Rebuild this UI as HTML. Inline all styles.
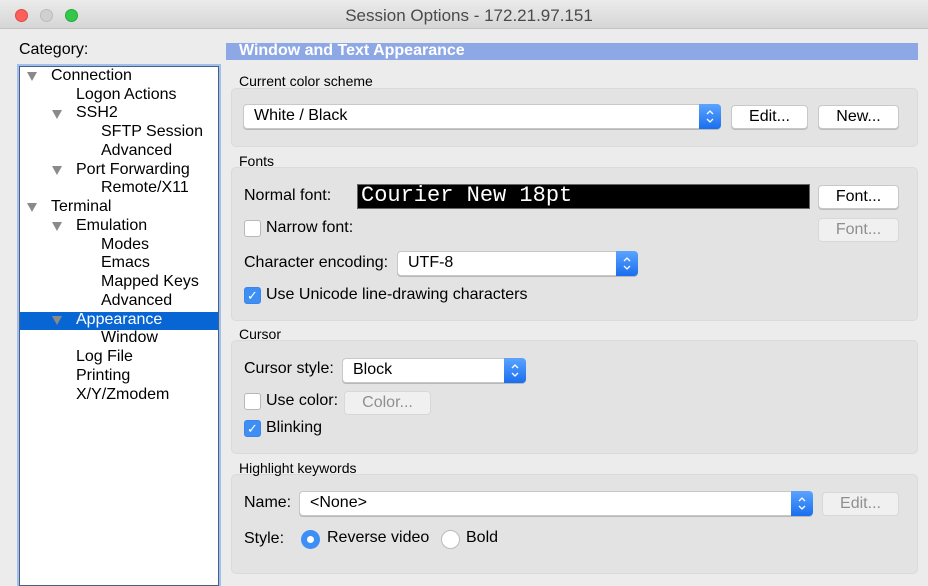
<!DOCTYPE html>
<html><head><meta charset="utf-8"><style>
*{box-sizing:border-box;margin:0;padding:0}
body{width:928px;height:577px;overflow:hidden;background:#ececec;font-family:"Liberation Sans",sans-serif;color:#000;position:relative}
.a{position:absolute;white-space:nowrap}
.tb{left:0;top:0;width:928px;height:29px;background:linear-gradient(#ebebeb,#d6d6d6);border-bottom:1px solid #c4c4c4}
.dot{width:13px;height:13px;border-radius:50%;top:9px}
.t{font-size:16px;line-height:18px}
.tree{left:19px;top:66px;width:200px;height:520px;background:#fff;border:1px solid #4b5f80;box-shadow:0 0 0 2px #9fc0ee}
.tri{width:0;height:0;border-left:5px solid transparent;border-right:5px solid transparent;border-top:9px solid #8a8a8a}
.grp{left:231px;width:687px;background:#e3e3e3;border:1px solid #dadada;border-radius:5px}
.lbl{font-size:14px}
.btn{background:#fff;border:1px solid #c8c8c8;border-radius:4px;text-align:center;font-size:16px;line-height:22px;box-shadow:0 1px 0 #bbb}
.dis{background:#f0f0f0;color:#8f8f8f;box-shadow:none;border-color:#d8d8d8}
.pop{background:#fff;border:1px solid #c8c8c8;border-radius:4px;box-shadow:0 1px 0 #b8b8b8;font-size:16px;line-height:22px;padding-left:10px}
.st{position:absolute;right:-1px;top:-1px;bottom:-1px;width:22px;background:linear-gradient(#5aa3ff,#1a6fee);border-radius:0 4px 4px 0}
.cb{width:17px;height:17px;border:1px solid #b8b8b8;background:#fff;border-radius:3px}
.cbc{background:#3d8ff6;border-color:#3a85e6;color:#fff;font-size:13px;line-height:15px;text-align:center}
</style></head><body>
<div class="a tb"></div>
<div class="a dot" style="left:15px;background:#fc605b;border:1px solid #de4a44"></div>
<div class="a dot" style="left:40px;background:#d0d0d0;border:1px solid #bbb"></div>
<div class="a dot" style="left:65px;background:#34c84a;border:1px solid #27a83a"></div>
<div class="a" style="left:0;width:928px;top:6px;text-align:center;font-size:17px;color:#4a4a4a;padding-left:10px">Session Options - 172.21.97.151</div>

<div class="a" style="left:19px;top:41px;font-size:16px">Category:</div>
<div class="a tree"></div>
<div class="a" style="left:20px;top:312px;width:198px;height:18px;background:#0866d4"></div>
<div class="a tri" style="left:27px;top:72px"></div>
<div class="a tri" style="left:52px;top:110px"></div>
<div class="a tri" style="left:52px;top:166px"></div>
<div class="a tri" style="left:27px;top:203px"></div>
<div class="a tri" style="left:52px;top:222px"></div>
<div class="a tri" style="left:52px;top:316px"></div>
<div class="a t" style="left:51px;top:67px">Connection</div>
<div class="a t" style="left:76px;top:86px">Logon Actions</div>
<div class="a t" style="left:76px;top:104px">SSH2</div>
<div class="a t" style="left:101px;top:123px">SFTP Session</div>
<div class="a t" style="left:101px;top:142px">Advanced</div>
<div class="a t" style="left:76px;top:161px">Port Forwarding</div>
<div class="a t" style="left:101px;top:179px">Remote/X11</div>
<div class="a t" style="left:51px;top:198px">Terminal</div>
<div class="a t" style="left:76px;top:217px">Emulation</div>
<div class="a t" style="left:101px;top:236px">Modes</div>
<div class="a t" style="left:101px;top:254px">Emacs</div>
<div class="a t" style="left:101px;top:273px">Mapped Keys</div>
<div class="a t" style="left:101px;top:292px">Advanced</div>
<div class="a t" style="left:76px;top:311px;color:#fff">Appearance</div>
<div class="a t" style="left:101px;top:329px">Window</div>
<div class="a t" style="left:76px;top:348px">Log File</div>
<div class="a t" style="left:76px;top:367px">Printing</div>
<div class="a t" style="left:76px;top:386px">X/Y/Zmodem</div>

<div class="a" style="left:226px;top:43px;width:692px;height:17px;background:#8ea8e6;color:#fff;font-weight:bold;font-size:16px;line-height:16px;padding-left:13px">Window and Text Appearance</div>

<div class="a grp" style="top:88px;height:59px"></div>
<div class="a lbl" style="left:239px;top:73px">Current color scheme</div>
<div class="a pop" style="left:243px;top:104px;width:478px;height:25px">White / Black<div class="st"><svg width="22" height="25"><path d="M8 10l3-3 3 3M8 15l3 3 3-3" stroke="#fff" stroke-width="1.3" fill="none"/></svg></div></div>
<div class="a btn" style="left:731px;top:105px;width:77px;height:24px">Edit...</div>
<div class="a btn" style="left:818px;top:105px;width:81px;height:24px">New...</div>

<div class="a grp" style="top:167px;height:154px"></div>
<div class="a lbl" style="left:239px;top:153px">Fonts</div>
<div class="a t" style="left:244px;top:187px">Normal font:</div>
<div class="a" style="left:357px;top:184px;width:453px;height:25px;background:#000;border:1px solid #666;color:#fff;font-family:'Liberation Mono',monospace;font-size:22px;line-height:22px;padding-left:3px">Courier New 18pt</div>
<div class="a btn" style="left:818px;top:185px;width:81px;height:24px">Font...</div>
<div class="a cb" style="left:244px;top:220px"></div>
<div class="a t" style="left:266px;top:219px">Narrow font:</div>
<div class="a btn dis" style="left:818px;top:218px;width:81px;height:24px">Font...</div>
<div class="a t" style="left:244px;top:254px">Character encoding:</div>
<div class="a pop" style="left:397px;top:251px;width:241px;height:25px">UTF-8<div class="st"><svg width="22" height="25"><path d="M8 10l3-3 3 3M8 15l3 3 3-3" stroke="#fff" stroke-width="1.3" fill="none"/></svg></div></div>
<div class="a cb cbc" style="left:244px;top:287px">&#10003;</div>
<div class="a t" style="left:266px;top:286px">Use Unicode line-drawing characters</div>

<div class="a grp" style="top:340px;height:114px"></div>
<div class="a lbl" style="left:239px;top:326px">Cursor</div>
<div class="a t" style="left:244px;top:360px">Cursor style:</div>
<div class="a pop" style="left:342px;top:358px;width:184px;height:25px">Block<div class="st"><svg width="22" height="25"><path d="M8 10l3-3 3 3M8 15l3 3 3-3" stroke="#fff" stroke-width="1.3" fill="none"/></svg></div></div>
<div class="a cb" style="left:244px;top:393px"></div>
<div class="a t" style="left:266px;top:392px">Use color:</div>
<div class="a btn dis" style="left:344px;top:391px;width:87px;height:24px">Color...</div>
<div class="a cb cbc" style="left:244px;top:420px">&#10003;</div>
<div class="a t" style="left:266px;top:419px">Blinking</div>

<div class="a grp" style="top:474px;height:100px"></div>
<div class="a lbl" style="left:239px;top:460px">Highlight keywords</div>
<div class="a t" style="left:244px;top:494px">Name:</div>
<div class="a pop" style="left:299px;top:491px;width:514px;height:25px">&lt;None&gt;<div class="st"><svg width="22" height="25"><path d="M8 10l3-3 3 3M8 15l3 3 3-3" stroke="#fff" stroke-width="1.3" fill="none"/></svg></div></div>
<div class="a btn dis" style="left:822px;top:492px;width:77px;height:24px">Edit...</div>
<div class="a t" style="left:244px;top:530px">Style:</div>
<div class="a" style="left:301px;top:530px;width:19px;height:19px;border-radius:50%;background:#3d8ff6"><div style="margin:6px;width:7px;height:7px;border-radius:50%;background:#fff"></div></div>
<div class="a t" style="left:327px;top:529px">Reverse video</div>
<div class="a" style="left:441px;top:530px;width:19px;height:19px;border-radius:50%;background:#fff;border:1px solid #bbb"></div>
<div class="a t" style="left:466px;top:529px">Bold</div>
</body></html>
